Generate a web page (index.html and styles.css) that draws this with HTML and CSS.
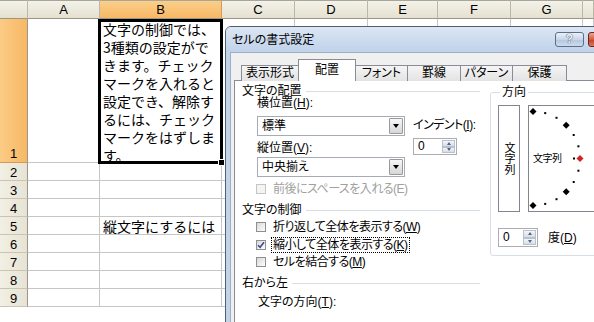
FILE: index.html
```html
<!DOCTYPE html>
<html lang="ja">
<head>
    <meta charset="UTF-8">
    <title>セルの書式設定</title>
    <link rel="stylesheet" href="styles.css">
</head>
<body>
    <!-- ワークシート -->
    <div class="sheet">
        <div class="hd"></div><div class="hd">A</div><div class="hd on">B</div><div class="hd">C</div><div class="hd">D</div><div class="hd">E</div><div class="hd">F</div><div class="hd">G</div><div class="hd"></div>

        <div class="rh on r1">1</div><div class="c"></div>
        <div class="c sel"><div class="wrap">文字の制御では、<br>3種類の設定がで<br>きます。チェック<br>マークを入れると<br>設定でき、解除す<br>るには、チェック<br>マークをはずしま<br>す。</div></div>
        <div class="c"></div><div class="c"></div><div class="c"></div><div class="c"></div><div class="c"></div><div class="c"></div>

        <div class="rh">2</div><div class="c"></div><div class="c"></div><div class="c"></div><div class="c"></div><div class="c"></div><div class="c"></div><div class="c"></div><div class="c"></div>
        <div class="rh">3</div><div class="c"></div><div class="c"></div><div class="c"></div><div class="c"></div><div class="c"></div><div class="c"></div><div class="c"></div><div class="c"></div>
        <div class="rh">4</div><div class="c"></div><div class="c"></div><div class="c"></div><div class="c"></div><div class="c"></div><div class="c"></div><div class="c"></div><div class="c"></div>
        <div class="rh">5</div><div class="c"></div><div class="c txt">縦文字にするには</div><div class="c"></div><div class="c"></div><div class="c"></div><div class="c"></div><div class="c"></div><div class="c"></div>
        <div class="rh">6</div><div class="c"></div><div class="c"></div><div class="c"></div><div class="c"></div><div class="c"></div><div class="c"></div><div class="c"></div><div class="c"></div>
        <div class="rh">7</div><div class="c"></div><div class="c"></div><div class="c"></div><div class="c"></div><div class="c"></div><div class="c"></div><div class="c"></div><div class="c"></div>
        <div class="rh">8</div><div class="c"></div><div class="c"></div><div class="c"></div><div class="c"></div><div class="c"></div><div class="c"></div><div class="c"></div><div class="c"></div>
        <div class="rh">9</div><div class="c"></div><div class="c"></div><div class="c"></div><div class="c"></div><div class="c"></div><div class="c"></div><div class="c"></div><div class="c"></div>
        <div class="rest"></div>
    </div>

    <!-- ダイアログ -->
    <div class="dialog">
        <div class="titlebar">
            <span class="title">セルの書式設定</span>
            <span class="cap-btn help">?</span>
            <span class="cap-btn close"></span>
        </div>
        <div class="dlg-body">
            <div class="tabs">
                <span class="tab">表示形式</span>
                <span class="tab on">配置</span>
                <span class="tab">フォント</span>
                <span class="tab">罫線</span>
                <span class="tab">パターン</span>
                <span class="tab">保護</span>
            </div>
            <div class="panel">
                <div class="col-left">
                    <div class="grp">文字の配置</div>
                    <div class="align-grid">
                        <div>
                            <div class="lbl">横位置(<u>H</u>):</div>
                            <div class="combo first"><span>標準</span><i class="drop"></i></div>
                            <div class="lbl lbl2">縦位置(<u>V</u>):</div>
                            <div class="combo second"><span>中央揃え</span><i class="drop"></i></div>
                        </div>
                        <div>
                            <div class="lbl indent-lbl">インデント(<u>I</u>):</div>
                            <div class="spin indent"><span class="val">0</span><span class="arrows"><i class="up"></i><i class="down"></i></span></div>
                        </div>
                    </div>
                    <div class="cb off space"><i class="box"></i><span>前後にスペースを入れる(E)</span></div>

                    <div class="grp ctl">文字の制御</div>
                    <div class="checks">
                        <div class="cb"><i class="box"></i><span>折り返して全体を表示する(<u>W</u>)</span></div>
                        <div class="cb"><i class="box checked"><svg width="8" height="8" viewBox="0 0 8 8"><path d="M1 4.2 L3.1 6.3 L7 1.2" fill="none" stroke="#3c4f8e" stroke-width="1.6"/></svg></i><span class="focus">縮小して全体を表示する(<u>K</u>)</span></div>
                        <div class="cb"><i class="box"></i><span>セルを結合する(<u>M</u>)</span></div>
                    </div>

                    <div class="grp rtl">右から左</div>
                    <div class="lbl dir">文字の方向(<u>T</u>):</div>
                </div>

                <div class="orient">
                    <div class="orient-lbl">方向</div>
                    <div class="orient-row">
                        <div class="vert"><span>文字列</span></div>
                        <div class="arc">
                            <svg width="94" height="105" viewBox="0 0 94 105">
                                <g fill="#000">
                                    <polygon points="4,2 7.5,5.5 4,9 0.5,5.5"/>
                                    <polygon points="37.2,15.8 40.7,19.3 37.2,22.8 33.7,19.3"/>
                                    <polygon points="37.2,82.2 40.7,85.7 37.2,89.2 33.7,85.7"/>
                                    <polygon points="4,96 7.5,99.5 4,103 0.5,99.5"/>
                                    <rect x="15.2" y="6.1" width="2" height="2"/>
                                    <rect x="26.5" y="10.8" width="2" height="2"/>
                                    <rect x="43.7" y="28" width="2" height="2"/>
                                    <rect x="48.4" y="39.3" width="2" height="2"/>
                                    <rect x="44" y="51.5" width="2" height="2"/>
                                    <rect x="48.4" y="63.7" width="2" height="2"/>
                                    <rect x="43.7" y="75" width="2" height="2"/>
                                    <rect x="26.5" y="92.2" width="2" height="2"/>
                                    <rect x="15.2" y="96.9" width="2" height="2"/>
                                </g>
                                <polygon points="51,49 54.5,52.5 51,56 47.5,52.5" fill="#d1232a"/>
                            </svg>
                            <span>文字列</span>
                        </div>
                    </div>
                    <div class="deg-row">
                        <div class="spin sm"><span class="val">0</span><span class="arrows"><i class="up"></i><i class="down"></i></span></div>
                        <span>度(<u>D</u>)</span>
                    </div>
                </div>
            </div>
        </div>
    </div>
</body>
</html>
```

FILE: styles.css
```css
/* ページ全体 */
body {
    margin: 0;
    width: 594px;
    height: 322px;
    overflow: hidden;
    position: relative;
    background: #fff;
    font-family: "Liberation Sans", "Noto Sans CJK JP", sans-serif;
}

/* ワークシート */
.sheet {
    display: grid;
    grid-template-columns: 28px 72px 122px 73px 73px 70px 73px 72px 1fr;
    grid-template-rows: 19px 144px repeat(8, 18px) 1fr;
    height: 322px;
}

/* 列見出し */
.hd {
    background: linear-gradient(#f4f2ea, #e5e1d1);
    border-right: 1px solid #bcb8a7;
    border-bottom: 1px solid #9a978a;
    box-shadow: inset 0 1px 0 #a8a69b;
    font-size: 13px;
    line-height: 17px;
    padding-top: 1px;
    text-align: center;
    color: #000;
}

.hd.on {
    background: linear-gradient(#fbd08c, #f7b866);
    border-right-color: #d59a55;
}

/* 行見出し */
.rh {
    background: linear-gradient(90deg, #f2efe4, #e7e3d4);
    border-right: 1px solid #9a978a;
    border-bottom: 1px solid #c9c5b4;
    font-size: 13px;
    line-height: 17px;
    padding-top: 1px;
    text-align: center;
    color: #000;
}

.rh.on {
    background: linear-gradient(90deg, #fbcb85, #f7b866);
    border-bottom-color: #d59a55;
}

.rh.r1 {
    display: flex;
    align-items: flex-end;
    justify-content: center;
    line-height: 16px;
}

/* セル */
.c {
    border-right: 1px solid #c6c6c6;
    border-bottom: 1px solid #c6c6c6;
}

.c.sel {
    position: relative;
}

/* 選択枠 */
.c.sel::after {
    content: "";
    position: absolute;
    top: 0;
    left: -2px;
    right: -2px;
    bottom: -2px;
    border: 3px solid #000;
}

/* フィルハンドル */
.c.sel::before {
    content: "";
    position: absolute;
    right: -4px;
    bottom: -4px;
    width: 5px;
    height: 5px;
    background: #000;
    border: 1px solid #fff;
    z-index: 1;
}

.wrap {
    font-family: "Noto Sans CJK JP", sans-serif;
    font-size: 14px;
    line-height: 18px;
    padding: 1px 0 0 3px;
    white-space: nowrap;
    color: #000;
}

.c.txt {
    font-family: "Noto Sans CJK JP", sans-serif;
    font-size: 14px;
    line-height: 18px;
    padding-left: 3px;
    white-space: nowrap;
}

.rest {
    grid-column: 1 / -1;
    background: #fff;
}

/* ダイアログ */
.dialog {
    position: absolute;
    left: 225px;
    top: 26px;
    width: 411px;
    height: 310px;
    border: 1px solid #4f5f73;
    border-radius: 6px 6px 0 0;
    background: #c3d4e9;
    display: flex;
    flex-direction: column;
    font-family: "Liberation Sans", "Noto Sans CJK JP", sans-serif;
    font-size: 12px;
    font-feature-settings: "palt";
    white-space: nowrap;
    color: #000;
}

.titlebar {
    height: 25px;
    display: flex;
    align-items: center;
    gap: 4px;
    padding: 0 6px;
    border-radius: 5px 5px 0 0;
    background: linear-gradient(#dce6f3, #bfd2ea);
}

.title {
    flex: 1;
    line-height: 14px;
}

.cap-btn {
    height: 15px;
    box-sizing: border-box;
    border: 1px solid #5d6f88;
    border-radius: 3px;
}

.help {
    width: 29px;
    background: linear-gradient(#eaf0f8, #c8d6ea 50%, #b3c6e0 50%, #cddcee);
    color: #f4f6fa;
    text-align: center;
    font: bold 12px/13px "Liberation Sans", sans-serif;
    text-shadow: 0 0 1px #3a4a62, 0 0 1px #3a4a62;
}

.close {
    width: 43px;
    background: linear-gradient(#eba694, #d45a40 50%, #c23d24 50%, #d97b5c);
    border-color: #6e2416;
}

.dlg-body {
    flex: 1;
    margin-left: 4px;
    background: #f0f0f0;
    border-top: 1px solid #9eafc4;
    border-left: 1px solid #9eafc4;
    padding: 6px 0 0 3px;
    display: flex;
    flex-direction: column;
}

/* タブ */
.tabs {
    display: flex;
    align-items: flex-end;
    height: 22px;
    margin-left: 7px;
    position: relative;
    z-index: 1;
}

.tab {
    height: 16px;
    box-sizing: border-box;
    border: 1px solid #898c95;
    border-bottom: none;
    background: linear-gradient(#f5f5f5, #e3e3e3);
    text-align: center;
    line-height: 15px;
    margin-left: -1px;
}

.tab:nth-child(1) { width: 58px; margin-left: 0; }
.tab:nth-child(2) { width: 58px; }
.tab:nth-child(3) { width: 53px; }
.tab:nth-child(4) { width: 54px; }
.tab:nth-child(5) { width: 53px; }
.tab:nth-child(6) { width: 55px; }

.tab.on {
    height: 22px;
    padding-top: 3px;
    background: #fff;
}

.panel {
    flex: 1;
    margin-top: -1px;
    border: 1px solid #898c95;
    border-right: none;
    background: #fff;
    display: flex;
    gap: 10px;
    padding: 4px 0 0 7px;
}

.col-left {
    width: 238px;
    flex: none;
}

/* グループ見出し */
.grp {
    display: flex;
    align-items: center;
    line-height: 12px;
}

.grp::after {
    content: "";
    flex: 1;
    border-top: 1px solid #d5dfe5;
    margin-left: 4px;
}

.grp.ctl { margin-top: 9px; }
.grp.rtl { margin-top: 9px; }

.lbl {
    line-height: 12px;
}

.align-grid {
    display: grid;
    grid-template-columns: 148px 1fr;
    column-gap: 8px;
    margin-left: 15px;
}

.combo.first { margin-top: 7px; }
.lbl2 { margin-top: 6px; }
.indent-lbl {
    margin-top: 22px;
    letter-spacing: -0.5px;
}
.dir { margin: 7px 0 0 16px; }

/* コンボボックス */
.combo {
    height: 20px;
    box-sizing: border-box;
    border: 1px solid #a5acb5;
    background: #fff;
    display: flex;
    align-items: center;
}

.combo.second { margin-top: 3px; }

.combo span {
    flex: 1;
    padding-left: 4px;
    line-height: 14px;
}

.drop {
    width: 14px;
    height: 16px;
    box-sizing: border-box;
    margin-right: 1px;
    border: 1px solid #999;
    border-radius: 1px;
    background: linear-gradient(#f7f7f7, #d6d6d6);
    display: flex;
    align-items: center;
    justify-content: center;
}

.drop::before {
    content: "";
    border-left: 3.5px solid transparent;
    border-right: 3.5px solid transparent;
    border-top: 4px solid #000;
}

/* スピンボタン */
.spin {
    display: flex;
    box-sizing: border-box;
    border: 1px solid #abadb3;
    background: #fff;
    width: 44px;
    height: 17px;
}

.spin.indent { margin-top: 7px; }

.spin.sm {
    width: 40px;
    height: 19px;
}

.val {
    flex: 1;
    padding-left: 4px;
    font-family: "Liberation Sans", sans-serif;
    font-size: 12px;
    line-height: 15px;
}

.spin.sm .val { line-height: 17px; }

.arrows {
    width: 13px;
    display: flex;
    flex-direction: column;
    margin: 1px;
}

.arrows i {
    flex: 1;
    box-sizing: border-box;
    border: 1px solid #b8c1cc;
    background: linear-gradient(#f3f6fa, #d5dde8);
    display: flex;
    align-items: center;
    justify-content: center;
}

.arrows i.up::before {
    content: "";
    border-left: 2.5px solid transparent;
    border-right: 2.5px solid transparent;
    border-bottom: 3px solid #55657c;
}

.arrows i.down::before {
    content: "";
    border-left: 2.5px solid transparent;
    border-right: 2.5px solid transparent;
    border-top: 3px solid #55657c;
}

/* チェックボックス */
.cb {
    display: flex;
    align-items: center;
    gap: 7px;
    line-height: 12px;
}

.cb span {
    letter-spacing: -0.5px;
}

.box {
    width: 10px;
    height: 10px;
    box-sizing: border-box;
    border: 1px solid #8e8f8f;
    background: linear-gradient(135deg, #d9d9d9, #fdfdfd);
    display: flex;
    align-items: center;
    justify-content: center;
}

.cb.off {
    color: #a0a0a0;
}

.cb.off .box {
    border-color: #c5c5c5;
    background: #f4f4f4;
}

.space { margin: 6px 0 0 14px; }

.checks {
    margin: 5px 0 0 14px;
    display: grid;
    row-gap: 5.5px;
}

.focus {
    outline: 1px dotted #000;
    outline-offset: 1px;
}

/* 方向 */
.orient {
    flex: none;
    width: 130px;
    align-self: flex-start;
    margin-top: 7px;
    padding: 0 0 8px 7px;
    border: 1px solid #d5dfe5;
    border-radius: 3px;
}

.orient-lbl {
    width: max-content;
    background: #fff;
    padding: 0 2px;
    margin: -7px 0 0 2px;
    line-height: 12px;
}

.orient-row {
    display: flex;
    gap: 8px;
    height: 107px;
    margin-top: 7px;
}

.vert {
    width: 22px;
    box-sizing: border-box;
    border: 1px solid #80858e;
    display: flex;
    align-items: center;
    justify-content: center;
}

.vert span {
    writing-mode: vertical-rl;
    font-size: 11px;
    line-height: 12px;
}

.arc {
    width: 95px;
    box-sizing: border-box;
    border: 1px solid #80858e;
    position: relative;
    display: flex;
    align-items: center;
}

.arc svg {
    position: absolute;
    top: 0;
    left: 0;
}

.arc span {
    padding-left: 4px;
    font-size: 10px;
    letter-spacing: -0.5px;
    line-height: 12px;
}

.deg-row {
    display: flex;
    align-items: center;
    gap: 10px;
    margin-top: 16px;
    line-height: 12px;
}
```
